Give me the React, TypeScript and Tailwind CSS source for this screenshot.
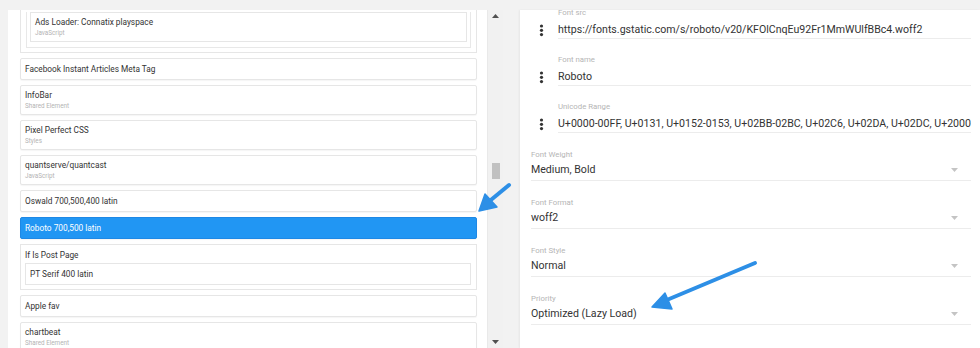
import React from "react";

const Card = ({ title, sub, selected }: { title: string; sub?: string; selected?: boolean }) => (
  <div
    className={
      "flex flex-col pl-[4px] border rounded-[2px] shadow-[0_1px_1px_rgba(0,0,0,0.04)] " +
      (sub ? "h-[30px] pt-[4px] " : "h-[22px] justify-center ") +
      (selected ? "bg-[#2196f3] border-[#1e88e5] text-white" : "bg-white border-[#e6e6e6] text-[#333]")
    }
  >
    <div className="text-[8.3px] leading-[11px] whitespace-nowrap">{title}</div>
    {sub && <div className="text-[6.3px] leading-[8px] mt-[1px] text-[#b3b3b3]">{sub}</div>}
  </div>
);

const Dots = () => (
  <div className="w-[27px] flex justify-start pl-[8px]">
    <svg width="5" height="13" viewBox="0 0 5 13">
      <circle cx="2.5" cy="2" r="1.6" fill="#333" />
      <circle cx="2.5" cy="6.3" r="1.6" fill="#333" />
      <circle cx="2.5" cy="10.6" r="1.6" fill="#333" />
    </svg>
  </div>
);

const TextRow = ({ label, value, last }: { label: string; value: string; last?: boolean }) => (
  <div className={"flex flex-col " + (last ? "mb-[16px]" : "mb-[15px]")}>
    <div className="pl-[27px] h-[12px] text-[7.8px] leading-[12px] text-[#b5b5b5]">{label}</div>
    <div className="flex items-center mt-[3px] h-[16px]">
      <Dots />
      <div className="flex-1 overflow-hidden whitespace-nowrap text-[10.6px] leading-[16px] text-[#333]">{value}</div>
    </div>
    <div className="ml-[27px] h-[1px] bg-[#ececec]" />
  </div>
);

const SelectRow = ({ label, value }: { label: string; value: string }) => (
  <div className="flex flex-col mb-[16px]">
    <div className="h-[12px] text-[7.8px] leading-[12px] text-[#b5b5b5]">{label}</div>
    <div className="flex items-center justify-between mt-[1px] h-[18px] pb-[2px]">
      <div className="text-[10.6px] leading-[16px] text-[#333] whitespace-nowrap">{value}</div>
      <svg width="7" height="4" viewBox="0 0 7 4" className="mr-[13px] mb-[1px]">
        <polygon points="0,0 7,0 3.5,4" fill="#c4c4c4" />
      </svg>
    </div>
    <div className="h-[1px] bg-[#ececec]" />
  </div>
);

export default function App() {
  return (
    <div className="relative w-[980px] h-[348px] overflow-hidden bg-[#f2f2f2] font-['Roboto',sans-serif] pt-[10px] pl-[8px] flex">
      {/* Left panel */}
      <div className="w-[479px] h-[338px] bg-white overflow-hidden pl-[12px] pr-[10px]">
        <div className="flex flex-col gap-[5px]">
          {/* nested scrolled card */}
          <div className="border-x border-b border-[#e6e6e6] px-[5px] pb-[4px]">
            <div className="border-x border-b border-[#e8e8e8] px-[3px] pb-[5px]">
              <div className="mt-[2px] h-[30px] border border-[#e6e6e6] pl-[4px] pt-[4px] flex flex-col text-[#333]">
                <div className="text-[8.3px] leading-[11px] whitespace-nowrap">Ads Loader: Connatix playspace</div>
                <div className="text-[6.3px] leading-[8px] mt-[1px] text-[#b3b3b3]">JavaScript</div>
              </div>
            </div>
          </div>
          <Card title="Facebook Instant Articles Meta Tag" />
          <Card title="InfoBar" sub="Shared Element" />
          <Card title="Pixel Perfect CSS" sub="Styles" />
          <Card title="quantserve/quantcast" sub="JavaScript" />
          <Card title="Oswald 700,500,400 latin" />
          <Card title="Roboto 700,500 latin" selected />
          <div className="h-[46px] border border-[#e6e6e6] pl-[4px] pr-[5px] pt-[5px] flex flex-col text-[#333]">
            <div className="text-[8.3px] leading-[11px]">If Is Post Page</div>
            <div className="mt-[2px] h-[22px] border border-[#e6e6e6] pl-[4px] flex items-center text-[8.3px]">
              PT Serif 400 latin
            </div>
          </div>
          <Card title="Apple fav" />
          <Card title="chartbeat" sub="Shared Element" />
        </div>
      </div>

      {/* Scrollbar */}
      <div className="w-[16px] h-[338px] bg-[#f1f1f1] border-l border-[#e9e9e9] flex flex-col items-center justify-between py-[4px]">
        <svg width="7" height="4" viewBox="0 0 7 4">
          <polygon points="3.5,0 7,4 0,4" fill="#505050" />
        </svg>
        <div className="flex-1 flex flex-col w-full items-center">
          <div className="mt-[145px] w-[8px] h-[16px] bg-[#c1c1c1]" />
        </div>
        <svg width="7" height="4" viewBox="0 0 7 4">
          <polygon points="0,0 7,0 3.5,4" fill="#505050" />
        </svg>
      </div>

      {/* Right panel */}
      <div className="ml-[17px] flex-1 h-[338px] bg-white overflow-hidden pl-[11px] pr-[9px] shadow-[-1px_0_2px_rgba(0,0,0,0.05)]">
        <div className="-mt-[3px] flex flex-col">
          <TextRow label="Font src" value="https://fonts.gstatic.com/s/roboto/v20/KFOlCnqEu92Fr1MmWUlfBBc4.woff2" />
          <TextRow label="Font name" value="Roboto" />
          <TextRow
            label="Unicode Range"
            value="U+0000-00FF, U+0131, U+0152-0153, U+02BB-02BC, U+02C6, U+02DA, U+02DC, U+2000-206F, U+2074"
            last
          />
          <SelectRow label="Font Weight" value="Medium, Bold" />
          <SelectRow label="Font Format" value="woff2" />
          <SelectRow label="Font Style" value="Normal" />
          <SelectRow label="Priority" value="Optimized (Lazy Load)" />
        </div>
      </div>

      {/* Annotation arrows */}
      <svg className="absolute left-0 top-0 pointer-events-none" width="980" height="348" viewBox="0 0 980 348">
        <g fill="#2d8fe6" stroke="#2d8fe6" strokeLinecap="round" strokeLinejoin="round">
          <line x1="509" y1="185" x2="486" y2="204" strokeWidth="4" />
          <polygon points="479,211 485,194 497,207" strokeWidth="1.5" />
          <line x1="755" y1="263" x2="662" y2="302" strokeWidth="4" />
          <polygon points="652,307 665,293 672,309" strokeWidth="1.5" />
        </g>
      </svg>
    </div>
  );
}
